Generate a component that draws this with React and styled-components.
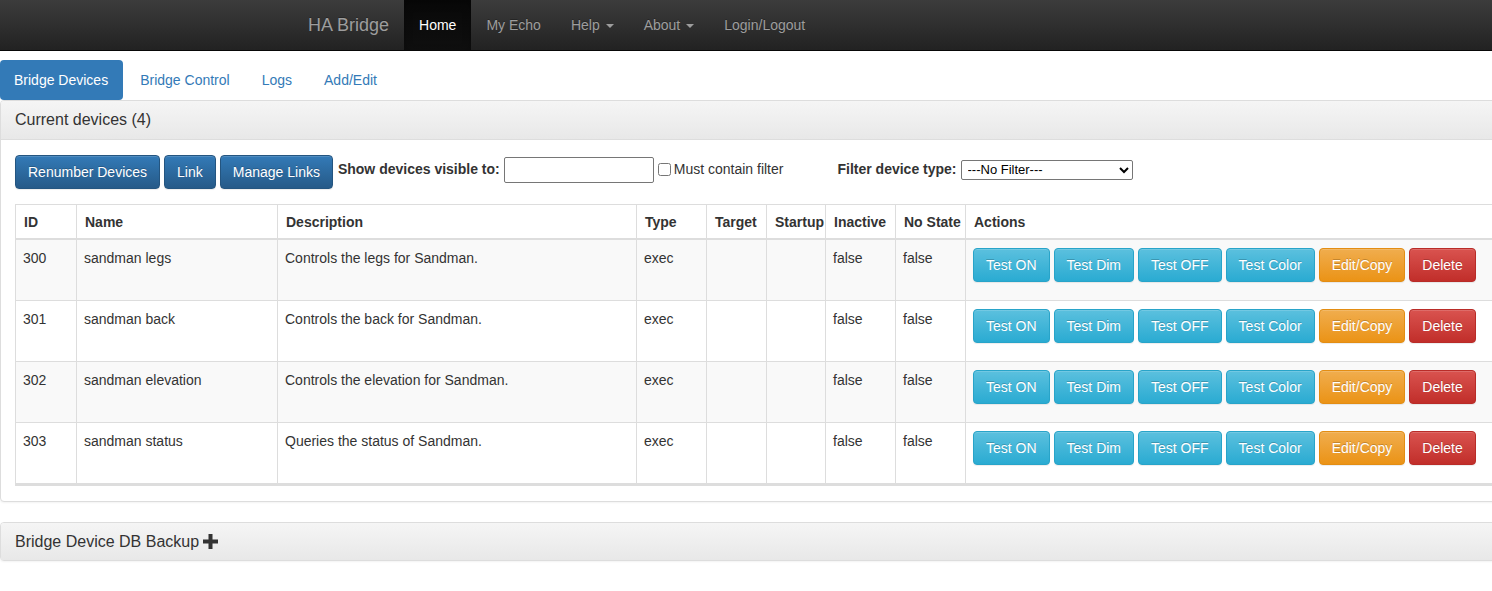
import React, { useState } from 'react'
import styled, { createGlobalStyle, css } from 'styled-components'

const Global = createGlobalStyle`
html { overflow-x: hidden; }
body {
  margin: 0;
  font-family: "Liberation Sans", Arial, Helvetica, sans-serif;
  font-size: 14px;
  line-height: 1.42857;
  color: #333;
  background: #fff;
}
* { box-sizing: border-box; }
`

const Page = styled.div`
width: 1756px;
`

const Navbar = styled.div`
height: 51px;
background-image: linear-gradient(to bottom, #3c3c3c 0, #222 100%);
border-bottom: 1px solid #080808;
`
const NavContainer = styled.div`
width: 1170px;
margin: 0 auto;
display: flex;
`
const Brand = styled.a`
height: 50px;
padding: 15px;
font-size: 18px;
line-height: 20px;
color: #9d9d9d;
text-shadow: 0 -1px 0 rgba(0,0,0,.25);
`
const NavItem = styled.a`
padding: 15px;
line-height: 20px;
color: #9d9d9d;
text-shadow: 0 -1px 0 rgba(0,0,0,.25);
cursor: pointer;
${p => p.$active && css`
  color: #fff;
  background-image: linear-gradient(to bottom, #080808 0, #0f0f0f 100%);
  box-shadow: inset 0 3px 9px rgba(0,0,0,.25);
`}
`
const Caret = styled.span`
display: inline-block;
width: 0;
height: 0;
margin-left: 6px;
vertical-align: middle;
border-top: 4px solid;
border-right: 4px solid transparent;
border-left: 4px solid transparent;
`

const Pills = styled.div`
display: flex;
gap: 2px;
margin-top: 9px;
`
const Pill = styled.a`
padding: 10px 15px;
line-height: 20px;
border-radius: 4px;
color: #337ab7;
cursor: pointer;
${p => p.$active && css`
  color: #fff;
  background-color: #337ab7;
  padding: 10px 15px 10px 14px;
`}
`

const Panel = styled.div`
border: 1px solid #ddd;
border-radius: 4px;
box-shadow: 0 1px 2px rgba(0,0,0,.05);
margin-bottom: 20px;
background: #fff;
`
const PanelHeading = styled.div`
padding: 10px 15px 10px 14px;
background-image: linear-gradient(to bottom, #f5f5f5 0, #e8e8e8 100%);
border-bottom: ${p => p.$last ? 'none' : '1px solid #ddd'};
border-radius: 3px 3px 0 0;
`
const PanelTitle = styled.h3`
margin: 0;
font-size: 16px;
font-weight: 400;
line-height: 1.1;
color: #333;
display: flex;
align-items: center;
gap: 4px;
`
const PanelBody = styled.div`
padding: 15px 15px 15px 14px;
`

const Toolbar = styled.div`
display: flex;
align-items: center;
gap: 4px;
height: 34px;
`

const variants = {
  primary: ['#337ab7', '#265a88', '#245580'],
  info: ['#5bc0de', '#2aabd2', '#28a4c9'],
  warning: ['#f0ad4e', '#eb9316', '#e38d13'],
  danger: ['#d9534f', '#c12e2a', '#b92c28'],
}

const Button = styled.button`
height: 34px;
padding: 6px 12px;
font-family: inherit;
font-size: 14px;
line-height: 20px;
color: #fff;
border-radius: 4px;
white-space: nowrap;
cursor: pointer;
text-shadow: 0 -1px 0 rgba(0,0,0,.2);
box-shadow: inset 0 1px 0 rgba(255,255,255,.15), 0 1px 1px rgba(0,0,0,.075);
background-image: linear-gradient(to bottom, ${p => variants[p.$v][0]} 0, ${p => variants[p.$v][1]} 100%);
border: 1px solid ${p => variants[p.$v][2]};
`

const Label = styled.label`
font-weight: 700;
margin-bottom: 3px;
margin-left: ${p => p.$ml || 0}px;
white-space: nowrap;
`
const TextInput = styled.input`
width: 150px;
height: 26px;
margin-bottom: 4px;
border: 1px solid #767676;
border-radius: 2px;
font-family: inherit;
font-size: 13px;
`
const CheckLabel = styled.label`
display: flex;
align-items: center;
white-space: nowrap;
margin-bottom: 3px;
input { margin: 0 3px 2px 0; width: 13px; height: 13px; }
`
const Select = styled.select`
width: 172px;
height: 20px;
margin-bottom: 4px;
font-family: inherit;
font-size: 13px;
color: #000;
border: 1px solid #767676;
border-radius: 2px;
background: #fff;
padding: 0 2px;
`

const Table = styled.table`
margin-top: 15px;
width: 100%;
table-layout: fixed;
border-collapse: collapse;
border: 1px solid #ddd;
border-bottom: 3px solid #ddd;
`
const Th = styled.th`
text-align: left;
padding: 7px 8px 6px;
line-height: 20px;
border: 1px solid #ddd;
border-bottom: 2px solid #ddd;
white-space: nowrap;
overflow: visible;
`
const Tr = styled.tr`
background: ${p => p.$odd ? '#f9f9f9' : '#fff'};
`
const Td = styled.td`
padding: 8px 8px 8px 7px;
line-height: 20px;
vertical-align: top;
border: 1px solid #ddd;
`
const Actions = styled.div`
display: flex;
gap: 4px;
height: 44px;
`

const PlusIcon = () => (
  <svg width="15" height="15" viewBox="0 0 15 15">
    <path d="M5.5 0h4v5.5h5.5v4h-5.5v5.5h-4v-5.5h-5.5v-4h5.5z" fill="#333" />
  </svg>
)

const devices = [
  { id: 300, name: 'sandman legs', desc: 'Controls the legs for Sandman.' },
  { id: 301, name: 'sandman back', desc: 'Controls the back for Sandman.' },
  { id: 302, name: 'sandman elevation', desc: 'Controls the elevation for Sandman.' },
  { id: 303, name: 'sandman status', desc: 'Queries the status of Sandman.' },
]

const cols = [61, 201, 359, 70, 60, 59, 70, 70]

function App() {
  const [visible, setVisible] = useState('')
  const [must, setMust] = useState(false)

  return (
    <Page>
      <Global />
      <Navbar>
        <NavContainer>
          <Brand>HA Bridge</Brand>
          <NavItem $active>Home</NavItem>
          <NavItem>My Echo</NavItem>
          <NavItem>Help<Caret /></NavItem>
          <NavItem>About<Caret /></NavItem>
          <NavItem>Login/Logout</NavItem>
        </NavContainer>
      </Navbar>

      <Pills>
        <Pill $active>Bridge Devices</Pill>
        <Pill>Bridge Control</Pill>
        <Pill>Logs</Pill>
        <Pill>Add/Edit</Pill>
      </Pills>

      <Panel>
        <PanelHeading>
          <PanelTitle>Current devices (4)</PanelTitle>
        </PanelHeading>
        <PanelBody>
          <Toolbar>
            <Button $v="primary">Renumber Devices</Button>
            <Button $v="primary">Link</Button>
            <Button $v="primary">Manage Links</Button>
            <Label $ml={1}>Show devices visible to:</Label>
            <TextInput value={visible} onChange={e => setVisible(e.target.value)} />
            <CheckLabel>
              <input type="checkbox" checked={must} onChange={e => setMust(e.target.checked)} />
              Must contain filter
            </CheckLabel>
            <Label $ml={50}>Filter device type:</Label>
            <Select defaultValue="">
              <option value="">---No Filter---</option>
              <option value="exec">exec</option>
            </Select>
          </Toolbar>

          <Table>
            <colgroup>
              {cols.map((w, i) => <col key={i} style={{ width: w }} />)}
              <col />
            </colgroup>
            <thead>
              <tr>
                <Th>ID</Th>
                <Th>Name</Th>
                <Th>Description</Th>
                <Th>Type</Th>
                <Th>Target</Th>
                <Th>Startup</Th>
                <Th>Inactive</Th>
                <Th>No State</Th>
                <Th>Actions</Th>
              </tr>
            </thead>
            <tbody>
              {devices.map((d, i) => (
                <Tr key={d.id} $odd={i % 2 === 0}>
                  <Td>{d.id}</Td>
                  <Td>{d.name}</Td>
                  <Td>{d.desc}</Td>
                  <Td>exec</Td>
                  <Td></Td>
                  <Td></Td>
                  <Td>false</Td>
                  <Td>false</Td>
                  <Td>
                    <Actions>
                      <Button $v="info">Test ON</Button>
                      <Button $v="info">Test Dim</Button>
                      <Button $v="info">Test OFF</Button>
                      <Button $v="info">Test Color</Button>
                      <Button $v="warning">Edit/Copy</Button>
                      <Button $v="danger">Delete</Button>
                    </Actions>
                  </Td>
                </Tr>
              ))}
            </tbody>
          </Table>
        </PanelBody>
      </Panel>

      <Panel>
        <PanelHeading $last>
          <PanelTitle>Bridge Device DB Backup <PlusIcon /></PanelTitle>
        </PanelHeading>
      </Panel>
    </Page>
  )
}

export default App
